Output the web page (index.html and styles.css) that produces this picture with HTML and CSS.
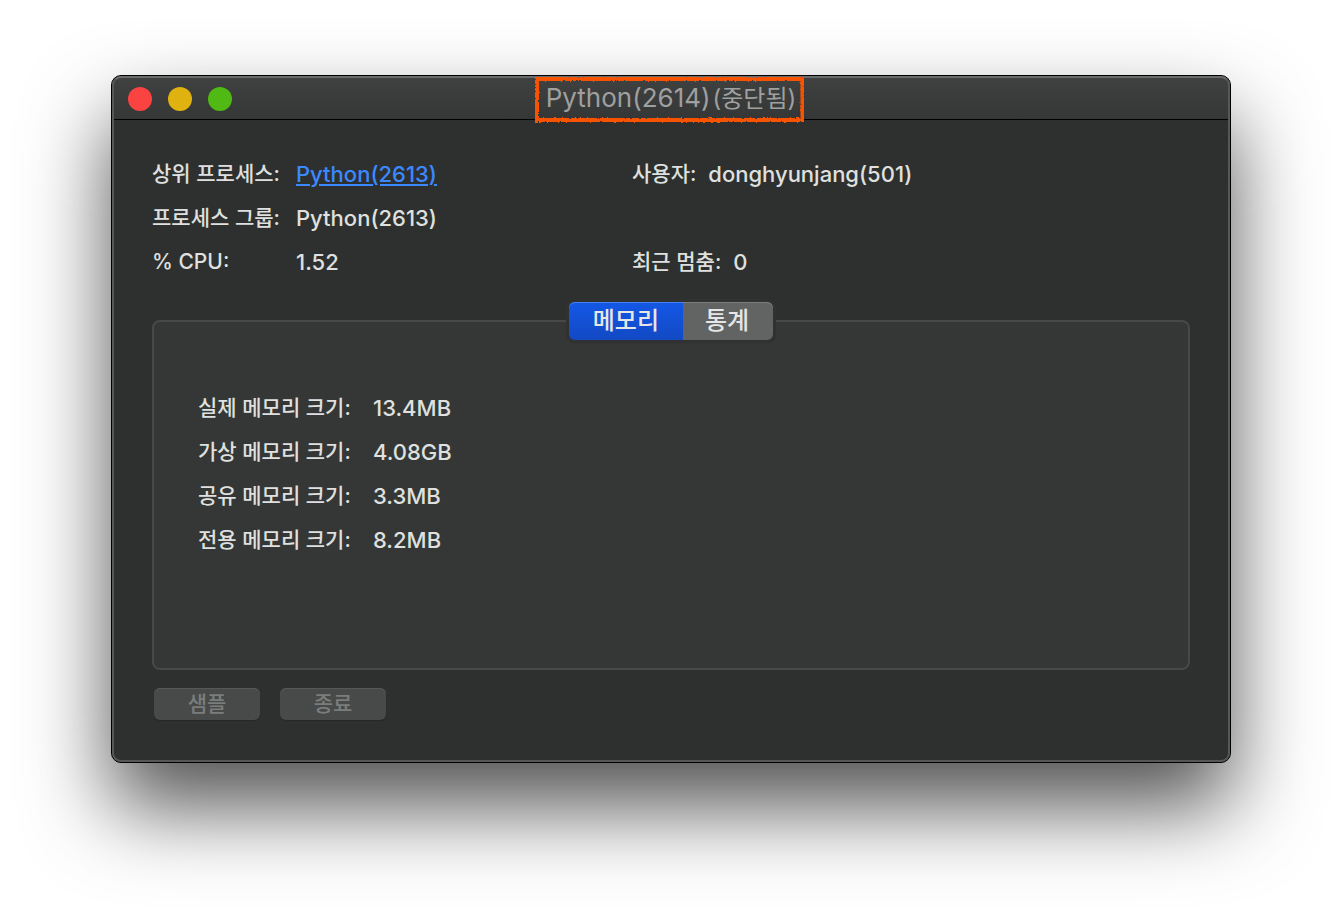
FILE: index.html
```html
<!DOCTYPE html>
<html lang="ko">
<head>
<meta charset="utf-8">
<meta name="viewport" content="width=device-width, initial-scale=1">
<title>Python(2614)(중단됨)</title>
<link rel="stylesheet" href="styles.css">
</head>
<body>
<main class="window">
  <header class="titlebar">
    <div class="lights">
      <button class="light close" type="button" aria-label="닫기"></button>
      <button class="light minimize" type="button" aria-label="최소화"></button>
      <button class="light expand" type="button" aria-label="확대"></button>
    </div>
    <h1 class="title">Python(2614)<span class="title-state">(중단됨)</span>
      <svg class="marker" aria-hidden="true">
        <defs>
          <filter id="crayon" x="-5%" y="-10%" width="110%" height="120%">
            <feTurbulence type="fractalNoise" baseFrequency="0.4" numOctaves="2" seed="4" result="noise"/>
            <feDisplacementMap in="SourceGraphic" in2="noise" scale="3" xChannelSelector="R" yChannelSelector="G"/>
          </filter>
        </defs>
        <rect class="marker-line" x="2" y="2" filter="url(#crayon)"/>
      </svg>
    </h1>
  </header>
  <div class="content">
    <div class="summary">
      <dl class="facts">
        <dt>상위 프로세스:</dt><dd><a href="#parent">Python(2613)</a></dd>
        <dt>프로세스 그룹:</dt><dd>Python(2613)</dd>
        <dt>% CPU:</dt><dd>1.52</dd>
      </dl>
      <dl class="facts-side">
        <div class="fact"><dt>사용자:</dt><dd>donghyunjang(501)</dd></div>
        <div class="fact fact-last"><dt>최근 멈춤:</dt><dd>0</dd></div>
      </dl>
    </div>
    <div class="tabs" role="tablist">
      <button class="tab tab-active" type="button" role="tab" id="tab-memory" aria-selected="true" aria-controls="memory">메모리</button>
      <button class="tab" type="button" role="tab" aria-selected="false">통계</button>
    </div>
    <section class="panel" id="memory" role="tabpanel" aria-labelledby="tab-memory">
      <dl class="facts facts-memory">
        <dt>실제 메모리 크기:</dt><dd>13.4MB</dd>
        <dt>가상 메모리 크기:</dt><dd>4.08GB</dd>
        <dt>공유 메모리 크기:</dt><dd>3.3MB</dd>
        <dt>전용 메모리 크기:</dt><dd>8.2MB</dd>
      </dl>
    </section>
    <div class="actions">
      <button class="action" type="button" disabled>샘플</button>
      <button class="action" type="button" disabled>종료</button>
    </div>
  </div>
</main>
</body>
</html>
```
FILE: styles.css
```css
* {
  box-sizing: border-box;
}

body {
  margin: 0;
  padding: 75px 111px 147px;
  background: #fff;
  color: #dfe0df;
  font-family: Inter, "Noto Sans CJK KR", sans-serif;
  font-weight: 500;
  overflow-x: hidden;
}

button {
  font-family: inherit;
  font-weight: 500;
  border: 0;
  padding: 0;
}

.window {
  position: relative;
  border: 1px solid #000;
  border-radius: 10px;
  background: #2e302f;
  box-shadow: 0 44px 84px rgba(0, 0, 0, 0.68);
}

/* light rim just inside the black outline */
.window::after {
  content: "";
  position: absolute;
  inset: 0;
  border: 2px solid #565857;
  border-top-color: #6a6c6b;
  border-radius: 9px;
  pointer-events: none;
}

.titlebar {
  display: grid;
  grid-template-columns: 1fr auto 1fr;
  align-items: center;
  height: 44px;
  padding: 0 16px;
  border-bottom: 1px solid #000;
  border-radius: 9px 9px 0 0;
  background: linear-gradient(#404141, #353636);
}

.lights {
  display: flex;
  gap: 16px;
}

.light {
  width: 24px;
  height: 24px;
  border-radius: 50%;
}

.close { background: #fb4341; }
.minimize { background: #dfb210; }
.expand { background: #50b914; }

.title {
  position: relative;
  z-index: 1;
  margin: 0;
  color: #9fa09f;
  font-size: 26px;
  font-weight: 400;
  line-height: 44px;
  white-space: nowrap;
}

.title-state {
  margin-left: 2px;
  font-size: 24px;
}

.marker {
  position: absolute;
  top: 1px;
  left: -11px;
  width: calc(100% + 19px);
  height: 48px;
}

.marker-line {
  width: calc(100% - 4px);
  height: 41px;
  fill: none;
  stroke: #f75200;
  stroke-width: 4px;
}

.content {
  padding: 32px 40px 42px;
}

.summary {
  display: grid;
  grid-template-columns: 480px 1fr;
}

dl, dd {
  margin: 0;
}

.facts,
.facts-side {
  display: grid;
  grid-auto-rows: 44px;
  align-items: center;
  font-size: 22px;
  line-height: 44px;
  white-space: nowrap;
}

.facts {
  grid-template-columns: 144px 1fr;
}

.facts-memory {
  grid-template-columns: 175px 1fr;
}

dt {
  font-size: 21px;
}

.fact {
  display: flex;
  gap: 12px;
}

.fact-last {
  grid-row: 3;
}

a {
  color: #3b89ff;
  text-decoration-thickness: 2px;
  text-underline-offset: 2px;
}

.tabs {
  position: relative;
  display: flex;
  width: max-content;
  height: 38px;
  margin: 18px auto -20px;
  border-radius: 6px;
  box-shadow: 0 0 0 3px #303231, 0 1px 2px 1px #222423;
}

.tab {
  padding: 0 24px 0 22px;
  border-radius: 0 6px 6px 0;
  background: #626463;
  box-shadow: inset 0 1px #7b7d7c;
  color: #e6e6e6;
  font-size: 24px;
  line-height: 36px;
}

.tab-active {
  padding: 0 24px;
  border-radius: 6px 0 0 6px;
  background: linear-gradient(#1458e6, #1249c4);
  box-shadow: inset 0 1px #4580ee;
}

.panel {
  padding: 64px 44px 106px;
  border: 2px solid #474948;
  border-radius: 8px;
  background: #353736;
}

.actions {
  display: flex;
  gap: 20px;
  padding: 18px 2px 0;
}

.action {
  width: 106px;
  height: 32px;
  border-radius: 6px;
  background: #484a49;
  box-shadow: inset 0 1px #565857, 0 1px 1px #262827;
  color: #7b7d7c;
  font-size: 21px;
  line-height: 30px;
}
```
